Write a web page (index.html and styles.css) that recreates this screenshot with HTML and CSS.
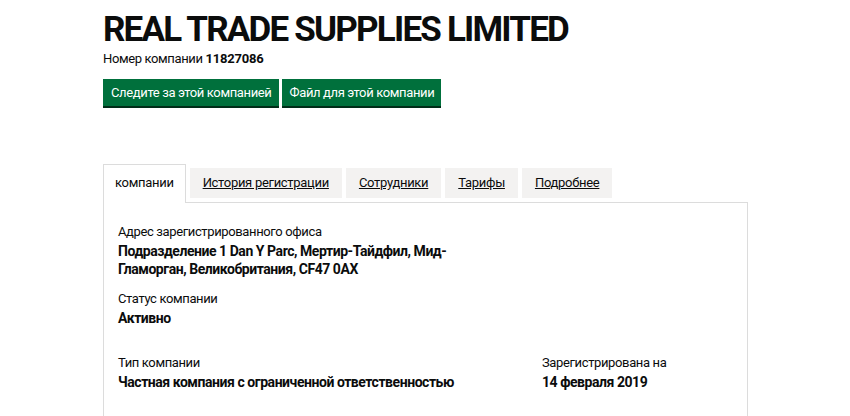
FILE: index.html
```html
<!DOCTYPE html>
<html lang="ru">
<head>
<meta charset="utf-8">
<title>REAL TRADE SUPPLIES LIMITED</title>
<link rel="stylesheet" href="styles.css">
</head>
<body>
<main class="page">
  <h1 class="title">REAL TRADE SUPPLIES LIMITED</h1>
  <p class="number">Номер компании <strong>11827086</strong></p>
  <div class="actions">
    <a class="btn" href="#">Следите за этой компанией</a>
    <a class="btn" href="#">Файл для этой компании</a>
  </div>
  <nav class="tabs">
    <span class="tab active">компании</span>
    <a class="tab" href="#">История регистрации</a>
    <a class="tab" href="#">Сотрудники</a>
    <a class="tab" href="#">Тарифы</a>
    <a class="tab" href="#">Подробнее</a>
  </nav>
  <section class="panel">
    <dl class="item">
      <dt>Адрес зарегистрированного офиса</dt>
      <dd class="addr">Подразделение 1 Dan Y Parc, Мертир-Тайдфил, Мид-Гламорган, Великобритания, CF47 0AX</dd>
    </dl>
    <dl class="item">
      <dt>Статус компании</dt>
      <dd>Активно</dd>
    </dl>
    <div class="row">
      <dl class="item">
        <dt>Тип компании</dt>
        <dd>Частная компания с ограниченной ответственностью</dd>
      </dl>
      <dl class="item">
        <dt>Зарегистрирована на</dt>
        <dd>14 февраля 2019</dd>
      </dl>
    </div>
  </section>
</main>
</body>
</html>
```

FILE: styles.css
```css
* { box-sizing: border-box; }
html, body { margin: 0; padding: 0; background: #fff; }
body {
  font-family: Roboto, "Liberation Sans", Arial, sans-serif;
  color: #0b0c0c;
}
.page {
  margin-left: 103px;
  width: 645px;
  padding-top: 10px;
}
.title {
  margin: 0;
  font-size: 35px;
  line-height: 40px;
  font-weight: 700;
  letter-spacing: -1.8px;
}
.number {
  margin: 0;
  font-size: 13px;
  line-height: 18px;
  letter-spacing: -0.37px;
}
.number strong { font-weight: 700; letter-spacing: -0.2px; }
.actions {
  display: flex;
  gap: 3px;
  margin-top: 11px;
}
.btn {
  display: block;
  background: #00703c;
  color: #fff;
  text-decoration: none;
  font-size: 13px;
  line-height: 18px;
  letter-spacing: -0.36px;
  padding: 5px 7px 4px 8px;
  box-shadow: 0 2px 0 #002d18;
}
.tabs {
  display: flex;
  align-items: flex-end;
  gap: 4px;
  margin-top: 58px;
  position: relative;
  z-index: 1;
}
.tab {
  display: block;
  background: #f3f2f1;
  color: #0b0c0c;
  font-size: 13px;
  line-height: 18px;
  letter-spacing: -0.3px;
  padding: 6px 13px;
  margin-bottom: 4px;
}
.tab.active {
  background: #fff;
  border: 1px solid #dcdcdc;
  border-bottom: 0;
  padding: 9px 11px 11px 11px;
  margin-bottom: -1px;
}
.panel {
  border: 1px solid #dcdcdc;
  padding: 20px 14px 30px;
}
.item { margin: 0 0 12px; }
.item dt {
  font-size: 13px;
  line-height: 18px;
  letter-spacing: -0.37px;
  color: #0b0c0c;
}
.item dd {
  margin: 1px 0 0;
  font-size: 14px;
  line-height: 18px;
  font-weight: 700;
  letter-spacing: -0.45px;
}
.addr { width: 330px; }
.row {
  display: grid;
  grid-template-columns: 424px 1fr;
  margin-top: 27px;
}
```
